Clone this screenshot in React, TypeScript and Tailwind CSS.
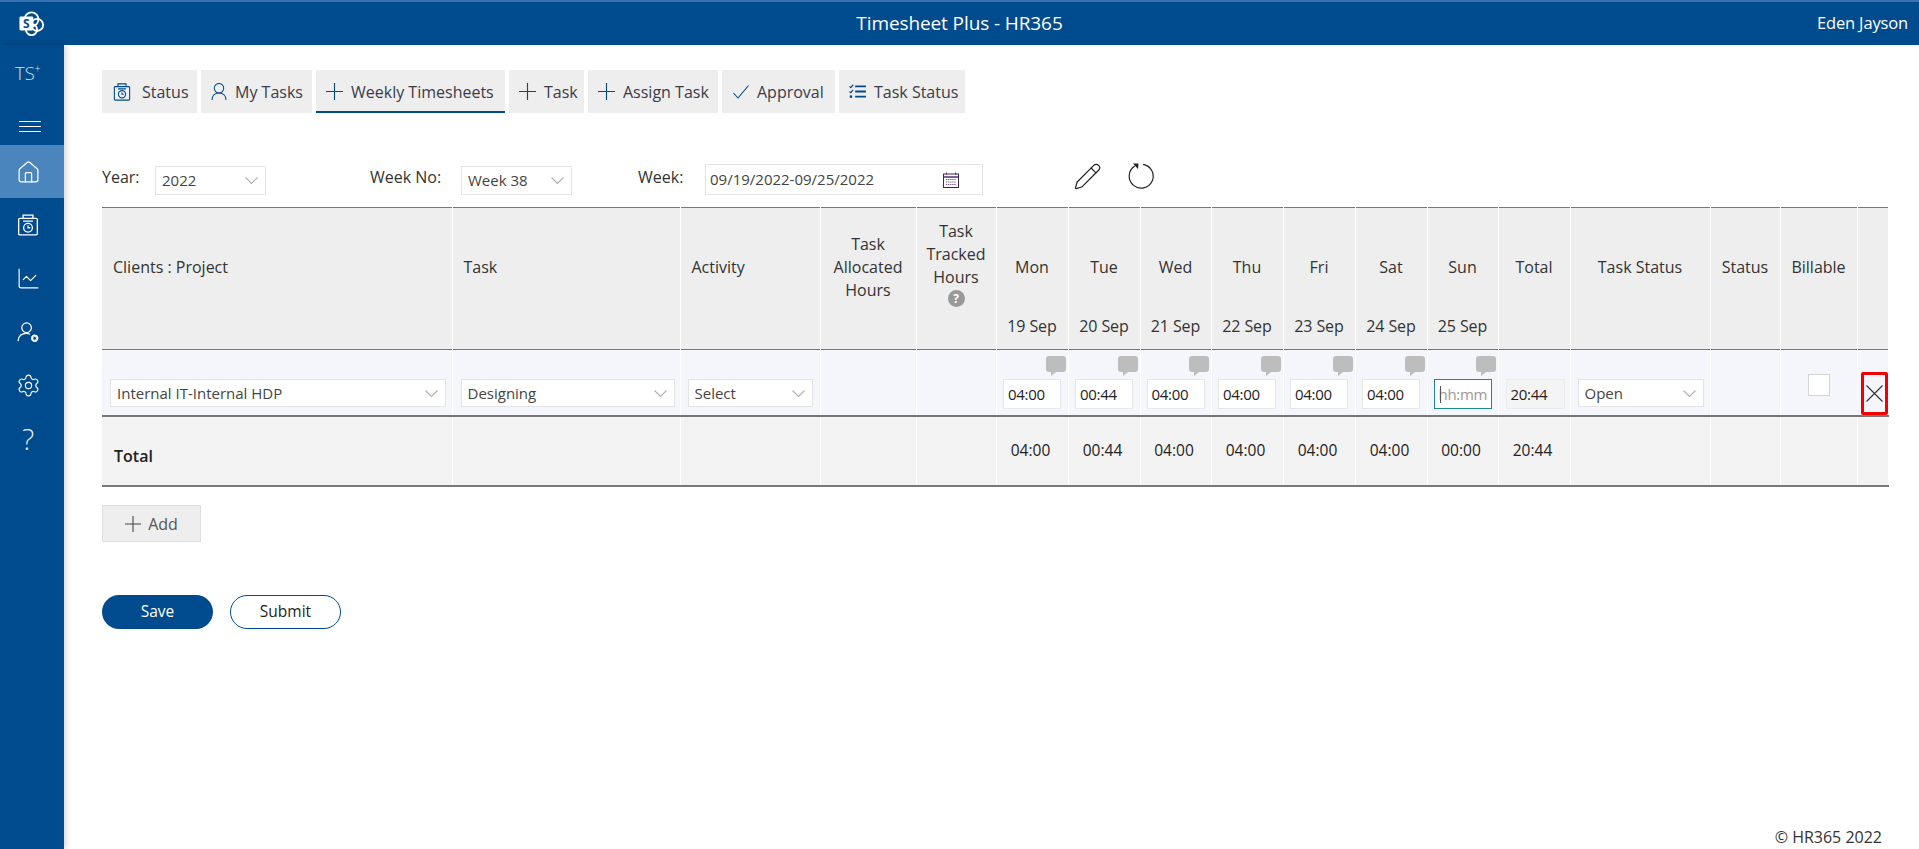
import { ChartLine, House, Pencil, Settings } from "lucide-react";
import type { ReactNode } from "react";

const font = { fontFamily: '"Open Sans", "Noto Sans", sans-serif' };

function ClockSave({ className }: { className?: string }) {
  return (
    <svg viewBox="0 0 20 20" fill="none" stroke="currentColor" strokeWidth="1.2" className={className}>
      <rect x="1.5" y="4" width="17" height="15" rx="1" />
      <path d="M5.5 4V1h9v3M5.5 6.5h9" />
      <circle cx="10" cy="12.5" r="4" />
      <path d="M10 10.5v2h2" />
    </svg>
  );
}

function UserGear({ className }: { className?: string }) {
  return (
    <svg viewBox="0 0 24 24" fill="none" stroke="currentColor" strokeWidth="1.3" className={className}>
      <circle cx="10" cy="7" r="5" />
      <path d="M1 21c.5-5 4-8 9-8 1.5 0 2.5.3 3.5.8" />
      <circle cx="18.5" cy="18" r="2.6" strokeWidth="2.4" strokeDasharray="1.6 0.5" />
      <circle cx="18.5" cy="18" r="3" strokeWidth="1.2" />
    </svg>
  );
}

function ThinPlus({ className }: { className?: string }) {
  return (
    <svg viewBox="0 0 18 18" fill="none" stroke="currentColor" strokeWidth="1.2" className={className}>
      <path d="M9 0v18M0 9h18" />
    </svg>
  );
}

function ThinCheck({ className }: { className?: string }) {
  return (
    <svg viewBox="0 0 16 14" fill="none" stroke="currentColor" strokeWidth="1.1" className={className}>
      <path d="M0.5 8l4.5 5L15.5 0.5" />
    </svg>
  );
}

function TaskList({ className }: { className?: string }) {
  return (
    <svg viewBox="0 0 18 16" fill="none" stroke="currentColor" className={className}>
      <path d="M6.5 2.5H18M6.5 8H18M6.5 13.5H18" strokeWidth="2" />
      <path d="M0.5 2.5l1.3 1.3L4.5 0.8M0.5 8l1.3 1.3L4.5 6.3" strokeWidth="1.2" />
      <circle cx="2" cy="13.5" r="1.4" fill="currentColor" stroke="none" />
    </svg>
  );
}

function UserOutline({ className }: { className?: string }) {
  return (
    <svg viewBox="0 0 16 18" fill="none" stroke="currentColor" strokeWidth="1.1" className={className}>
      <circle cx="8" cy="5.5" r="5" />
      <path d="M0.6 18c0-4.5 3-7.5 7.4-7.5s7.4 3 7.4 7.5" />
    </svg>
  );
}

function CalendarIcon({ className }: { className?: string }) {
  return (
    <svg viewBox="0 0 16 16" fill="none" className={className}>
      <rect x="0.5" y="2" width="15" height="13.5" stroke="#3f2560" />
      <path d="M0.5 5h15" stroke="#3f2560" strokeWidth="1.4" />
      <path d="M3.5 0.5v2.5M12.5 0.5v2.5" stroke="#8a2a7a" />
      <path d="M3 7.5h10M3 10h10M3 12.5h10" stroke="#7a3f8c" strokeWidth="1.2" strokeDasharray="1.2 0.9" />
    </svg>
  );
}

function RefreshIcon({ className }: { className?: string }) {
  return (
    <svg viewBox="0 0 26 26" fill="none" className={className}>
      <path d="M15 1.3A12 12 0 1 1 6.8 3" stroke="#222" strokeWidth="1.2" />
      <path d="M5 0.5h5.5L10 6z" fill="#222" />
    </svg>
  );
}

function Chevron() {
  return (
    <svg viewBox="0 0 13 7" fill="none" stroke="#b0b0b0" strokeWidth="1.1" className="h-[7px] w-[13px]">
      <path d="M0.5 0.5L6.5 6.5L12.5 0.5" />
    </svg>
  );
}

function SharePointLogo() {
  return (
    <svg viewBox="0 0 28 28" className="h-[26px] w-[27px]">
      <circle cx="14" cy="9" r="7.5" fill="none" stroke="white" strokeWidth="2" />
      <circle cx="20" cy="15" r="6.5" fill="none" stroke="white" strokeWidth="2" />
      <circle cx="14" cy="20" r="6" fill="none" stroke="white" strokeWidth="2" />
      <rect x="1" y="6" width="15" height="15" rx="1.5" fill="white" />
      <text x="8.5" y="18" textAnchor="middle" fontSize="13" fontWeight="700" fill="#004b8d" fontFamily="Open Sans">
        S
      </text>
    </svg>
  );
}

const tabs = [
  { label: "Status", width: "w-[95px]", gap: "gap-[11px]", pad: "pl-[11px]", icon: <ClockSave className="h-[18px] w-[18px]" /> },
  { label: "My Tasks", width: "w-[111px]", gap: "gap-[8px]", pad: "pl-[10px]", icon: <UserOutline className="h-[17px] w-[16px]" /> },
  { label: "Weekly Timesheets", width: "w-[189px]", gap: "gap-[8px]", pad: "pl-[10px]", icon: <ThinPlus className="h-[17px] w-[17px]" />, active: true },
  { label: "Task", width: "w-[75px]", gap: "gap-[8px]", pad: "pl-[10px]", icon: <ThinPlus className="h-[17px] w-[17px]" /> },
  { label: "Assign Task", width: "w-[130px]", gap: "gap-[8px]", pad: "pl-[10px]", icon: <ThinPlus className="h-[17px] w-[17px]" /> },
  { label: "Approval", width: "w-[113px]", gap: "gap-[8px]", pad: "pl-[11px]", icon: <ThinCheck className="h-[14px] w-[16px]" /> },
  { label: "Task Status", width: "w-[126px]", gap: "gap-[8px]", pad: "pl-[10px]", icon: <TaskList className="h-[15px] w-[17px]" /> },
];

const days = [
  { name: "Mon", date: "19 Sep", value: "04:00", col: "w-[72px]" },
  { name: "Tue", date: "20 Sep", value: "00:44", col: "w-[72px]" },
  { name: "Wed", date: "21 Sep", value: "04:00", col: "w-[71px]" },
  { name: "Thu", date: "22 Sep", value: "04:00", col: "w-[72px]" },
  { name: "Fri", date: "23 Sep", value: "04:00", col: "w-[72px]" },
  { name: "Sat", date: "24 Sep", value: "04:00", col: "w-[72px]" },
  { name: "Sun", date: "25 Sep", value: "", col: "w-[71px]" },
];

function Dropdown({ value, className }: { value: string; className: string }) {
  return (
    <div className={`flex items-center justify-between border border-[#e4e4e4] bg-white pl-[6px] pr-[7px] text-[15px] text-[#444] ${className}`}>
      <span>{value}</span>
      <Chevron />
    </div>
  );
}

function HeadCell({ children, left, className = "" }: { children: ReactNode; left?: boolean; className?: string }) {
  return (
    <th className={`border-r border-white p-0 align-top font-medium ${left ? "text-left" : "text-center"}`}>
      <div className={`flex h-[119px] flex-col justify-center leading-[23px] ${left ? "pl-[11px]" : "items-center"} ${className}`}>{children}</div>
    </th>
  );
}

function Empty() {
  return <td className="border-r border-white p-0" />;
}

export default function App() {
  return (
    <div className="flex h-screen flex-col overflow-hidden bg-white text-[#333]" style={font}>
      <header className="grid h-[45px] shrink-0 grid-cols-[1fr_auto_1fr] items-center border-t-2 border-[#3a6fb0] bg-[#004b8d] text-white">
        <div className="pl-[18px]">
          <SharePointLogo />
        </div>
        <h1 className="text-[19px] tracking-[-0.1px]">Timesheet Plus - HR365</h1>
        <div className="pr-[11px] text-right text-[16.5px] tracking-[-0.15px]">Eden Jayson</div>
      </header>

      <div className="flex min-h-0 flex-1">
        <aside className="flex w-[64px] shrink-0 flex-col items-stretch bg-[#004b8d] text-white shadow-[2px_0_6px_rgba(0,0,0,0.18)]">
          <div className="flex h-[50px] items-center pl-[15px] pt-[5px] text-[18.5px] font-light text-[#d6e3f0]">
            TS<sup className="text-[10px]">+</sup>
          </div>
          <div className="flex h-[50px] items-center justify-center pr-[4px] pt-[12px]">
            <div className="flex w-[22px] flex-col gap-[4px]">
              <span className="h-px bg-white" />
              <span className="h-px bg-white" />
              <span className="h-px bg-white" />
            </div>
          </div>
          <div className="flex h-[53px] items-center justify-center bg-[#4a86bd] pr-[8px] pt-[2px]">
            <House className="h-[25px] w-[25px]" strokeWidth={1.2} />
          </div>
          <div className="flex h-[53px] items-center justify-center pr-[8px]">
            <ClockSave className="h-[22px] w-[22px]" />
          </div>
          <div className="flex h-[53px] items-center justify-center pr-[8px] pt-[2px]">
            <ChartLine className="h-[25px] w-[25px]" strokeWidth={1.1} />
          </div>
          <div className="flex h-[53px] items-center justify-center pr-[8px] pt-[4px]">
            <UserGear className="h-[23px] w-[23px]" />
          </div>
          <div className="flex h-[53px] items-center justify-center pr-[8px] pt-[3px]">
            <Settings className="h-[25px] w-[25px]" strokeWidth={1.1} />
          </div>
          <div className="flex h-[53px] items-center justify-center pr-[8px] pt-[4px] text-[29px] font-light text-[#dfe9f3]">?</div>
        </aside>

        <main className="flex min-w-0 flex-1 flex-col pl-[38px] pr-[31px] pt-[25px]">
          <nav className="flex h-[43px] gap-[4px]">
            {tabs.map((tab) => (
              <div
                key={tab.label}
                className={`flex items-center border-b-2 bg-[#eeeeee] pt-[2px] text-[16px] text-[#3b3b4a] ${tab.width} ${tab.gap} ${tab.pad} ${
                  tab.active ? "border-[#004b8d]" : "border-transparent"
                }`}
              >
                <span className="text-[#004b8d]">{tab.icon}</span>
                <span className="whitespace-nowrap">{tab.label}</span>
              </div>
            ))}
          </nav>

          <div className="mt-[51px] flex h-[31px] items-start text-[16px] font-medium">
            <span className="w-[53px] pt-[1px]">Year:</span>
            <Dropdown value="2022" className="mt-[2px] h-[29px] w-[111px] font-normal" />
            <span className="ml-[104px] w-[91px] pt-[1px]">Week No:</span>
            <Dropdown value="Week 38" className="mt-[2px] h-[29px] w-[111px] font-normal" />
            <span className="ml-[66px] w-[67px] pt-[1px]">Week:</span>
            <div className="flex h-[31px] w-[278px] items-center justify-between border border-[#e4e4e4] pl-[4px] pr-[23px] text-[15px] font-normal text-[#444]">
              <span>09/19/2022-09/25/2022</span>
              <CalendarIcon className="h-4 w-4" />
            </div>
            <Pencil className="ml-[90px] h-[29px] w-[29px] -translate-y-[2px] text-[#222]" strokeWidth={1} />
            <RefreshIcon className="ml-[26px] h-[26px] w-[26px] -translate-y-[1px]" />
          </div>

          <table className="mt-[12px] w-[1786px] table-fixed border-collapse text-[16px]">
            <colgroup>
              <col className="w-[350px]" />
              <col className="w-[228px]" />
              <col className="w-[140px]" />
              <col className="w-[96px]" />
              <col className="w-[80px]" />
              {days.map((day) => (
                <col key={day.name} className={day.col} />
              ))}
              <col className="w-[72px]" />
              <col className="w-[140px]" />
              <col className="w-[70px]" />
              <col className="w-[77px]" />
              <col className="w-[31px]" />
            </colgroup>
            <thead>
              <tr className="h-[142px] border-y border-[#777] bg-[#eeeeee] text-[#333]">
                <HeadCell left>Clients : Project</HeadCell>
                <HeadCell left>Task</HeadCell>
                <HeadCell left>Activity</HeadCell>
                <HeadCell>
                  <span>Task</span>
                  <span>Allocated</span>
                  <span>Hours</span>
                </HeadCell>
                <HeadCell className="pb-[8px]">
                  <span>Task</span>
                  <span>Tracked</span>
                  <span>Hours</span>
                  <span className="mt-[1px] flex h-[17px] w-[17px] items-center justify-center rounded-full bg-[#999] text-[12px] font-bold leading-none text-white">?</span>
                </HeadCell>
                {days.map((day) => (
                  <th key={day.name} className="border-r border-white p-0 pt-[48px] align-top font-medium leading-[23px]">
                    <div>{day.name}</div>
                    <div className="mt-[36px] whitespace-nowrap tracking-[-0.1px]">{day.date}</div>
                  </th>
                ))}
                <HeadCell>Total</HeadCell>
                <HeadCell>Task Status</HeadCell>
                <HeadCell>Status</HeadCell>
                <HeadCell>Billable</HeadCell>
                <HeadCell>{""}</HeadCell>
              </tr>
            </thead>
            <tbody>
              <tr className="h-[66px] border-b-2 border-[#777] bg-[#f4f6fb]">
                <td className="border-r border-white p-0 pb-[8px] pl-[8px] align-bottom">
                  <Dropdown value="Internal IT-Internal HDP" className="h-[28px] w-[336px]" />
                </td>
                <td className="border-r border-white p-0 pb-[8px] pl-[8px] align-bottom">
                  <Dropdown value="Designing" className="h-[28px] w-[214px]" />
                </td>
                <td className="border-r border-white p-0 pb-[8px] pl-[7px] align-bottom">
                  <Dropdown value="Select" className="h-[28px] w-[125px]" />
                </td>
                <Empty />
                <Empty />
                {days.map((day) => (
                  <td key={day.name} className="border-r border-white p-0 pb-[6px] pt-[6px] align-top">
                    <div className="flex flex-col items-center">
                      <div className="flex w-full justify-end pr-[2px]">
                        <div className="relative h-[16px] w-[20px] rounded-[3px] bg-[#bdbdbd]">
                          <span className="absolute bottom-[-4px] left-[5px] h-0 w-0 border-r-[5px] border-t-[4px] border-r-transparent border-t-[#bdbdbd]" />
                        </div>
                      </div>
                      <div
                        className={`relative mt-[7px] flex h-[30px] w-[58px] items-center border bg-white pl-[4px] text-[15px] tracking-[-0.3px] ${
                          day.value ? "border-[#e8e8e8] text-[#222]" : "border-[#1f8a8a] text-[#999]"
                        }`}
                      >
                        {day.value || (
                          <>
                            <span className="absolute left-[5px] top-[6px] h-[17px] w-px bg-[#555]" />
                            hh:mm
                          </>
                        )}
                      </div>
                    </div>
                  </td>
                ))}
                <td className="border-r border-white p-0 pb-[6px] align-bottom">
                  <div className="ml-[7px] flex h-[30px] w-[59px] items-center border border-[#ececec] bg-[#f4f4f4] pl-[4px] text-[15px] tracking-[-0.3px] text-[#222]">20:44</div>
                </td>
                <td className="border-r border-white p-0 pb-[8px] pl-[7px] align-bottom">
                  <Dropdown value="Open" className="h-[28px] w-[126px]" />
                </td>
                <Empty />
                <td className="border-r border-white p-0 pb-[19px] align-bottom">
                  <div className="ml-[27px] h-[22px] w-[22px] border border-[#d4d4d4] bg-white" />
                </td>
                <td className="border-r border-white p-0 pl-[3px] align-bottom">
                  <div className="flex h-[43px] w-[27px] items-center justify-center rounded-[2px] border-[3px] border-[#f00000]">
                    <svg viewBox="0 0 17 17" fill="none" stroke="#333" strokeWidth="1.1" className="h-[17px] w-[17px]">
                      <path d="M0.5 0.5l16 16M16.5 0.5l-16 16" />
                    </svg>
                  </div>
                </td>
              </tr>
              <tr className="h-[70px] border-b-2 border-[#777] bg-[#f3f3f3] text-[15.5px] font-medium text-[#222]">
                <td className="border-r border-white p-0 pl-[12px] pt-[10px] text-[16px] font-semibold">Total</td>
                <Empty />
                <Empty />
                <Empty />
                <Empty />
                {days.map((day) => (
                  <td key={day.name} className="border-r border-white p-0 pr-[3px] text-center">
                    {day.value || "00:00"}
                  </td>
                ))}
                <td className="border-r border-white p-0 pr-[3px] text-center">20:44</td>
                <Empty />
                <Empty />
                <Empty />
                <Empty />
              </tr>
            </tbody>
          </table>

          <button type="button" className="mt-[18px] flex h-[37px] w-[99px] items-center justify-center gap-[7px] border border-[#dedede] bg-[#eeeeee] text-[16px] text-[#555]">
            <ThinPlus className="h-4 w-4 text-[#444]" />
            Add
          </button>

          <div className="mt-[53px] flex gap-[17px]">
            <button type="button" className="h-[34px] w-[111px] rounded-full bg-[#004b8d] text-[15.5px] text-white">
              Save
            </button>
            <button type="button" className="h-[34px] w-[111px] rounded-full border border-[#004b8d] bg-white text-[15.5px] text-[#222]">
              Submit
            </button>
          </div>

          <footer className="mr-[6px] mt-auto text-right text-[16px] text-[#333]">© HR365 2022</footer>
        </main>
      </div>
    </div>
  );
}
